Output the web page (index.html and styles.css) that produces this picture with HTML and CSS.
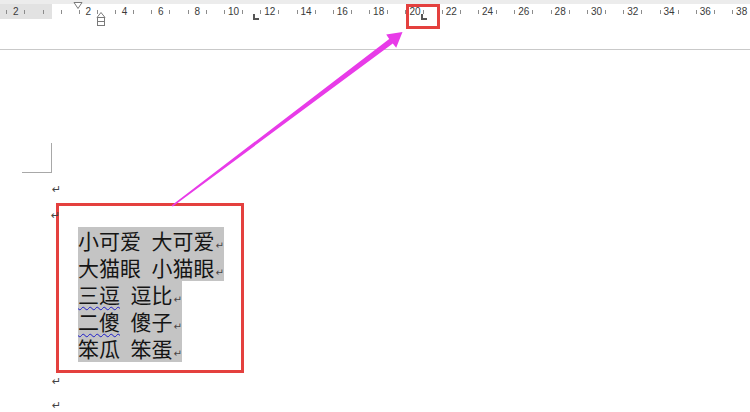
FILE: index.html
```
<!DOCTYPE html>
<html lang="zh">
<head>
<meta charset="utf-8">
<link rel="stylesheet" href="styles.css">
</head>
<body>
<div class="page">
  <header class="header">
    <div class="topband"></div>
    <div class="ruler">
      <div class="scale">
        <span class="cell">2</span>
        <span class="cell"></span>
        <span class="cell">2</span>
        <span class="cell">4</span>
        <span class="cell">6</span>
        <span class="cell">8</span>
        <span class="cell">10</span>
        <span class="cell">12</span>
        <span class="cell">14</span>
        <span class="cell">16</span>
        <span class="cell">18</span>
        <span class="cell">20</span>
        <span class="cell">22</span>
        <span class="cell">24</span>
        <span class="cell">26</span>
        <span class="cell">28</span>
        <span class="cell">30</span>
        <span class="cell">32</span>
        <span class="cell">34</span>
        <span class="cell">36</span>
        <span class="cell">38</span>
      </div>
    </div>
  </header>

  <main class="doc">
    <div class="corner"></div>
    <div class="para para-top"><span class="pm">↵</span></div>
    <div class="box">
      <span class="pm pm-hidden">↵</span>
      <div class="line">小可爱 大可爱<span class="pm">↵</span></div>
      <div class="line">大猫眼 小猫眼<span class="pm">↵</span></div>
      <div class="line"><span class="typo">三逗</span> 逗比<span class="pm">↵</span></div>
      <div class="line"><span class="typo">二傻</span> 傻子<span class="pm">↵</span></div>
      <div class="line">笨瓜 笨蛋<span class="pm">↵</span></div>
    </div>
    <div class="para"><span class="pm">↵</span></div>
    <div class="para para-2"><span class="pm">↵</span></div>
  </main>

  <svg class="marker first-indent" width="10" height="8" viewBox="0 0 10 8">
    <polygon points="1,0.5 9,0.5 5,6.5" fill="#fff" stroke="#7a7a7a" stroke-width="1"/>
  </svg>
  <svg class="marker hang-indent" width="10" height="15" viewBox="0 0 10 15">
    <polygon points="5,0.5 9,5.5 1,5.5" fill="#fff" stroke="#7a7a7a" stroke-width="1"/>
    <rect x="1.5" y="5.5" width="7" height="8" fill="#fff" stroke="#7a7a7a" stroke-width="1"/>
    <line x1="1.5" y1="9.5" x2="8.5" y2="9.5" stroke="#7a7a7a" stroke-width="1"/>
  </svg>
  <span class="tab tab-a"></span>
  <span class="tab tab-b"></span>
  <span class="callout"></span>

  <svg class="arrow" width="750" height="412" viewBox="0 0 750 412">
    <polygon points="171.5,205.5 172.8,206.6 392.8,43.4 396.2,47.8 402.5,32 386.2,34.4 389.2,39" fill="#e83be8"/>
  </svg>
</div>
</body>
</html>
```

FILE: styles.css
```
html, body {
  margin: 0;
  padding: 0;
  background: #fff;
}

.page {
  position: relative;
  width: 750px;
  height: 412px;
  overflow: hidden;
  font-family: "Liberation Sans", Arial, sans-serif;
}

.header {
  height: 49px;
  border-bottom: 1px solid #c9c9c9;
}

.topband {
  height: 4px;
  background: #ececec;
}

.ruler {
  height: 15px;
  background: linear-gradient(to right, #e2e2e2 52px, #fff 52px);
  overflow: hidden;
}

.scale {
  display: flex;
  margin-left: -2.45px;
}

.cell {
  position: relative;
  flex: 0 0 36.3px;
  text-align: center;
  font-size: 10px;
  line-height: 15px;
  color: #3a3a3a;
}

.cell::before,
.cell::after {
  content: "";
  position: absolute;
  top: 6px;
  width: 1px;
  height: 4px;
  background: #8c8c8c;
}

.cell::before { left: calc(50% - 9.5px); }
.cell::after { left: calc(50% + 8.5px); }

.doc {
  padding-top: 93px;
}

.corner {
  margin-left: 22px;
  width: 29px;
  height: 29px;
  border-right: 1px solid #a8a8a8;
  border-bottom: 1px solid #a8a8a8;
}

.para {
  margin-left: 52px;
  height: 14px;
  line-height: 14px;
}

.para-top {
  margin-top: 8px;
}

.para-2 {
  margin-top: 10px;
}

.pm {
  font-family: "DejaVu Sans", sans-serif;
  font-size: 11px;
  color: #444;
}

.box {
  position: relative;
  margin-top: 8px;
  margin-left: 56px;
  width: 163px;
  height: 143px;
  border: 3px solid #e4403e;
  padding: 21px 0 0 19px;
}

.pm-hidden {
  position: absolute;
  left: -8px;
  top: 3px;
  line-height: 14px;
}

.line {
  width: fit-content;
  font-family: "Noto Sans CJK SC", sans-serif;
  font-size: 21px;
  line-height: 27px;
  height: 27px;
  color: #151515;
  background: #c4c4c4;
  word-spacing: 5.8px;
  white-space: pre;
}

.line .pm {
  word-spacing: 0;
  margin-left: 1px;
  font-size: 10px;
}

.typo {
  text-decoration: underline wavy #1c1cc8;
  text-decoration-thickness: 1px;
  text-underline-offset: 3px;
  text-decoration-skip-ink: none;
}

.marker {
  position: absolute;
}

.first-indent {
  left: 73px;
  top: 2px;
}

.hang-indent {
  left: 96px;
  top: 12px;
}

.tab {
  position: absolute;
  top: 14px;
  width: 4px;
  height: 4px;
  border-left: 2px solid #555;
  border-bottom: 2px solid #555;
}

.tab-a { left: 253px; }
.tab-b { left: 421px; }

.callout {
  position: absolute;
  left: 406px;
  top: 4px;
  width: 28px;
  height: 19px;
  border: 3px solid #e4403e;
}

.arrow {
  position: absolute;
  left: 0;
  top: 0;
  pointer-events: none;
}
```
